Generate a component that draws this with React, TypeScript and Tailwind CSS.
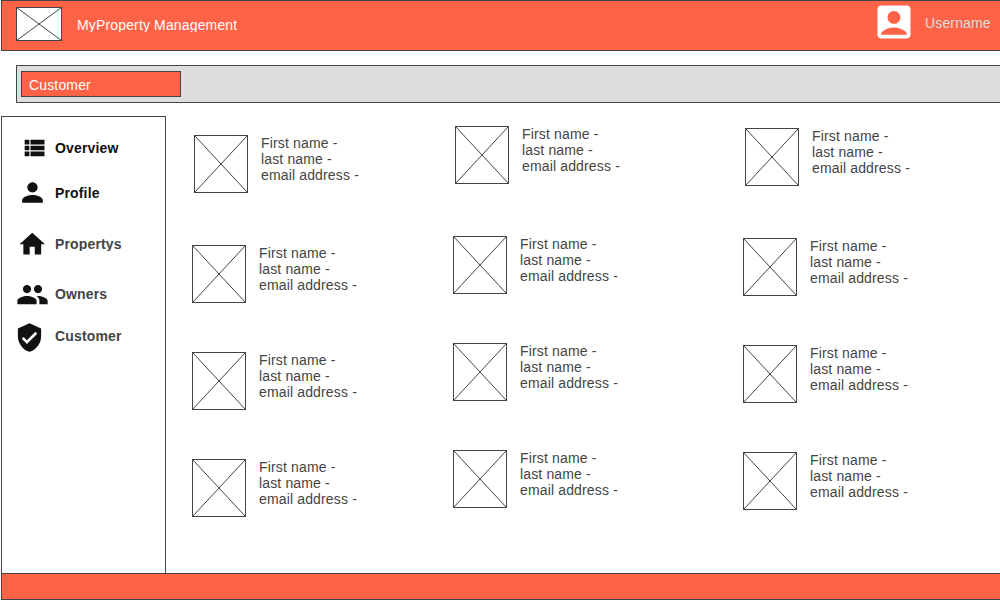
import type { ReactNode } from "react";
import { MdAccountBox, MdHome, MdPeople, MdPerson, MdVerifiedUser } from "react-icons/md";

function ListIcon({ className }: { className: string }) {
  return (
    <svg viewBox="0 0 24 24" fill="currentColor" className={className}>
      <path d="M4 14h4v-4H4v4zm0 5h4v-4H4v4zM4 9h4V5H4v4zm5 5h12v-4H9v4zm0 5h12v-4H9v4zM9 5v4h12V5H9z" />
    </svg>
  );
}

function Placeholder({ width, height }: { width: number; height: number }) {
  return (
    <svg width={width} height={height} className="block shrink-0" fill="none" stroke="#444444">
      <rect x={0.5} y={0.5} width={width - 1} height={height - 1} fill="#ffffff" />
      <path d={`M0.5 0.5L${width - 0.5} ${height - 0.5}M${width - 0.5} 0.5L0.5 ${height - 0.5}`} />
    </svg>
  );
}

function CustomerCard({ first }: { first: boolean }) {
  return (
    <div className={first ? "ml-0.5 flex h-[58px] gap-[13px]" : "flex h-[58px] gap-[13px]"}>
      <Placeholder width={54} height={58} />
      <div className="whitespace-nowrap leading-4">
        <p>First name -</p>
        <p>last name -</p>
        <p>email address -</p>
      </div>
    </div>
  );
}

function CustomerColumn({ className }: { className: string }) {
  return (
    <div className={className}>
      <CustomerCard first />
      <div className="mt-[52px] flex flex-col gap-[49px]">
        <CustomerCard first={false} />
        <CustomerCard first={false} />
        <CustomerCard first={false} />
      </div>
    </div>
  );
}

function NavItem({ className, icon, label }: { className: string; icon: ReactNode; label: string }) {
  return (
    <li className={`flex items-start ${className}`}>
      <span className="flex w-[53px] shrink-0 text-[#111111]">{icon}</span>
      <span className="h-[15px] overflow-hidden pr-1 font-bold leading-4">{label}</span>
    </li>
  );
}

export default function App() {
  return (
    <div className="flex h-[600px] w-[1000px] flex-col overflow-hidden bg-white font-['Liberation_Sans',sans-serif] text-sm tracking-[0.15px] text-[#444444]">
      <header className="-mr-px ml-px flex h-[51px] shrink-0 border border-[#444444] bg-[#ff6347] pl-[14px] text-white">
        <div className="mt-1.5">
          <Placeholder width={46} height={34} />
        </div>
        <h1 className="ml-[15px] mt-4 h-[15px] overflow-hidden leading-4">MyProperty Management</h1>
        <div className="ml-auto flex w-[128.5px]">
          <MdAccountBox className="-mt-px size-[44px] shrink-0 text-white" />
          <span className="ml-[9.5px] mt-3.5 leading-4 text-[#dddddd]">Username</span>
        </div>
      </header>

      <div className="-mr-px ml-4 mt-[14px] flex h-[38px] shrink-0 border border-[#444444] bg-[#dddddd] pl-1 pt-[5px]">
        <div className="h-[26px] w-40 border border-[#444444] bg-[#ff6347] pl-[7px] pt-[5px] leading-4 text-white">
          Customer
        </div>
      </div>

      <div className="mt-[13px] flex h-[457px] shrink-0">
        <nav className="ml-px w-[165px] border-x border-t border-[#444444]">
          <ul className="flex flex-col">
            <NavItem className="mt-[23px] h-[45px] text-[#111111]" icon={<ListIcon className="ml-[18px] -mt-1.5 size-[28px] shrink-0" />} label="Overview" />
            <NavItem className="h-[51px] text-[#111111]" icon={<MdPerson className="ml-[15px] -mt-2 size-[31px] shrink-0" />} label="Profile" />
            <NavItem className="h-[50px]" icon={<MdHome className="ml-[15px] -mt-[7px] size-[30.5px] shrink-0" />} label="Propertys" />
            <NavItem className="h-[42px]" icon={<MdPeople className="ml-[14px] -mt-2 size-[33px] shrink-0" />} label="Owners" />
            <NavItem className="h-10" icon={<MdVerifiedUser className="ml-3 -mt-1.5 size-[31px] shrink-0" />} label="Customer" />
          </ul>
        </nav>
        <main className="flex pl-[26px]">
          <CustomerColumn className="w-[261px] pt-[19px]" />
          <CustomerColumn className="w-[290px] pt-2.5" />
          <CustomerColumn className="w-[200px] pt-3" />
        </main>
      </div>

      <footer className="-mr-px ml-px h-[27px] shrink-0 border border-[#444444] bg-[#ff6347]" />
    </div>
  );
}
